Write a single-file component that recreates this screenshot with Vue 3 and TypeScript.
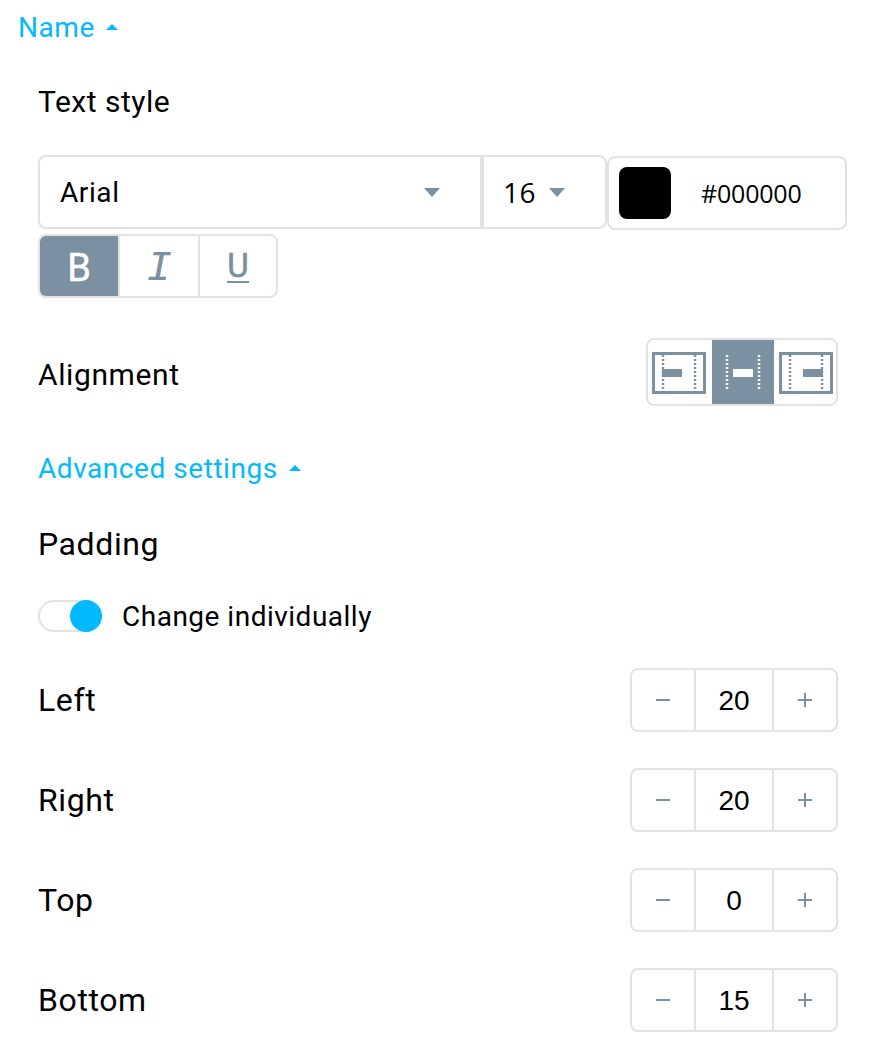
<script setup lang="ts">
const steppers = [
  { label: 'Left', value: 20 },
  { label: 'Right', value: 20 },
  { label: 'Top', value: 0 },
  { label: 'Bottom', value: 15 }
];

const aligns = [
  { id: 'left', barX: 10, active: false },
  { id: 'center', barX: 17, active: true },
  { id: 'right', barX: 24, active: false }
];
</script>

<template>
  <div class="panel">
    <div class="toggle-link name-link">Name <span class="caret-up"></span></div>

    <div class="section">
      <div class="title text-style">Text style</div>

      <div class="font-row">
        <div class="select">
          <div class="font-cell">
            <span>Arial</span>
            <span class="caret-down"></span>
          </div>
          <div class="size-cell">
            <span class="alt size">16</span>
            <span class="caret-down small"></span>
          </div>
        </div>
        <div class="color">
          <span class="swatch"></span>
          <span class="alt hex">#000000</span>
        </div>
      </div>

      <div class="style-group">
        <div class="style-btn active"><span class="b">B</span></div>
        <div class="style-btn"><span class="i">I</span></div>
        <div class="style-btn"><span class="u">U</span></div>
      </div>

      <div class="row align-row">
        <div class="title align-title">Alignment</div>
        <div class="align-group">
          <div v-for="a in aligns" :key="a.id" class="align-btn" :class="{ active: a.active }">
            <svg class="align-icon" width="54" height="42" viewBox="0 0 54 42">
              <rect v-if="!a.active" x="1.5" y="1.5" width="51" height="39" fill="none" stroke="#7b91a1" stroke-width="3" />
              <path
                d="M11 3V39M43 3V39"
                fill="none"
                :stroke="a.active ? '#fff' : '#7b91a1'"
                stroke-width="2.5"
                stroke-dasharray="2 2"
              />
              <rect :x="a.barX" y="17" width="20" height="8" :fill="a.active ? '#fff' : '#7b91a1'" />
            </svg>
          </div>
        </div>
      </div>

      <div class="toggle-link advanced-link">Advanced settings <span class="caret-up"></span></div>

      <div class="title large padding-title">Padding</div>

      <div class="switch-row">
        <span class="switch"><span class="knob"></span></span>
        <span class="switch-label">Change individually</span>
      </div>

      <div v-for="s in steppers" :key="s.label" class="row step-row">
        <div class="title large">{{ s.label }}</div>
        <div class="stepper">
          <div class="step-btn">
            <svg width="14" height="14" viewBox="0 0 14 14"><path d="M0 7H14" stroke="#7b91a1" stroke-width="2" /></svg>
          </div>
          <div class="step-value">{{ s.value }}</div>
          <div class="step-btn">
            <svg width="14" height="14" viewBox="0 0 14 14"><path d="M0 7H14M7 0V14" stroke="#7b91a1" stroke-width="2" /></svg>
          </div>
        </div>
      </div>
    </div>
  </div>
</template>

<style>
html,
body {
  background: #fff;
}
</style>

<style scoped>
.panel {
  width: 880px;
  height: 1048px;
  box-sizing: border-box;
  overflow: hidden;
  font-family: Roboto, sans-serif;
  color: #000;
}

.toggle-link {
  color: #00b9ff;
  letter-spacing: 0.55px;
  display: flex;
  align-items: center;
}

.name-link {
  height: 54px;
  padding-left: 18px;
  font-size: 28px;
}

.caret-up {
  display: inline-block;
  width: 0;
  height: 0;
  margin-left: 11px;
  border-left: 6px solid transparent;
  border-right: 6px solid transparent;
  border-bottom: 6px solid #00b9ff;
}

.section {
  padding: 0 33px 0 38px;
}

.title {
  font-size: 30px;
  line-height: 40px;
  letter-spacing: 0.6px;
}

.title.large {
  font-size: 32px;
}

.text-style {
  margin-top: 28px;
  letter-spacing: 0.5px;
}

.font-row {
  display: flex;
  align-items: flex-start;
  margin-top: 33px;
}

.select {
  display: flex;
  width: 569px;
  height: 74px;
  box-sizing: border-box;
  border: 2px solid #e2e2e2;
  border-radius: 8px;
  font-size: 28px;
  letter-spacing: 0.6px;
}

.font-cell {
  width: 444px;
  box-sizing: border-box;
  padding: 0 40px 0 20px;
  display: flex;
  align-items: center;
  justify-content: space-between;
  border-right: 4px solid #e2e2e2;
}

.size-cell {
  flex: 1;
  display: flex;
  align-items: center;
  padding-left: 19px;
}

.alt {
  font-family: "Open Sans", sans-serif;
  letter-spacing: 0;
}

.size {
  letter-spacing: 0.6px;
}

.caret-down {
  width: 0;
  height: 0;
  border-left: 8px solid transparent;
  border-right: 8px solid transparent;
  border-top: 9px solid #7b91a1;
}

.caret-down.small {
  margin-left: 13px;
}

.color {
  display: flex;
  align-items: center;
  width: 240px;
  height: 74px;
  margin-top: 1px;
  box-sizing: border-box;
  border: 2px solid #e2e2e2;
  border-radius: 8px;
  padding-left: 10px;
}

.swatch {
  width: 52px;
  height: 52px;
  border-radius: 8px;
  background: #000;
}

.hex {
  margin-left: 30px;
  font-size: 25px;
  letter-spacing: -0.2px;
}

.style-group {
  display: flex;
  width: 240px;
  height: 64px;
  margin-top: 4px;
  box-sizing: border-box;
  border: 2px solid #e2e2e2;
  border-radius: 8px;
  overflow: hidden;
  background: #e2e2e2;
}

.style-btn {
  width: 78px;
  flex: none;
  display: flex;
  align-items: center;
  justify-content: center;
  color: #7b91a1;
  background: #fff;
}

.style-btn + .style-btn {
  margin-left: 2px;
}

.style-btn:last-child {
  width: 76px;
}

.style-btn.active {
  background: #7b91a1;
  color: #fff;
}

.b {
  margin-top: 3px;
  font-size: 38px;
  -webkit-text-stroke: 0.4px #fff;
}

.i {
  margin-top: 6px;
  font-family: "Liberation Mono", monospace;
  font-style: italic;
  font-size: 42px;
  -webkit-text-stroke: 0.2px #7b91a1;
}

.u {
  margin-top: 2px;
  font-size: 33px;
  line-height: 28px;
  border-bottom: 2px solid #7b91a1;
  padding-bottom: 1px;
  -webkit-text-stroke: 0.6px #7b91a1;
}

.row {
  display: flex;
  align-items: center;
  justify-content: space-between;
  padding-right: 9px;
}

.align-row {
  height: 68px;
  margin-top: 40px;
}

.align-title {
  margin-top: 6px;
}

.align-group {
  display: flex;
  width: 192px;
  height: 68px;
  box-sizing: border-box;
  border: 2px solid #e2e2e2;
  border-radius: 8px;
  overflow: hidden;
}

.align-btn {
  width: 62px;
  flex: none;
  display: flex;
  align-items: center;
  justify-content: center;
}

.align-icon {
  margin-top: 2px;
}

.align-btn + .align-btn {
  margin-left: 2px;
}

.align-btn.active {
  background: #7b91a1;
}

.align-btn:last-child {
  width: 60px;
}

.advanced-link {
  height: 40px;
  margin-top: 42px;
  font-size: 28px;
  font-weight: 400;
}

.padding-title {
  margin-top: 36px;
}

.switch-row {
  display: flex;
  align-items: center;
  height: 32px;
  margin-top: 36px;
}

.switch {
  position: relative;
  width: 64px;
  height: 32px;
  box-sizing: border-box;
  border: 2px solid #e2e2e2;
  border-radius: 16px;
}

.knob {
  position: absolute;
  top: -2px;
  right: -2px;
  width: 32px;
  height: 32px;
  border-radius: 50%;
  background: #00b9ff;
}

.switch-label {
  margin-left: 20px;
  font-size: 28px;
  letter-spacing: 0.5px;
}

.step-row {
  height: 64px;
  margin-bottom: 36px;
}

.switch-row + .step-row {
  margin-top: 36px;
}

.stepper {
  display: flex;
  width: 208px;
  height: 64px;
  box-sizing: border-box;
  border: 2px solid #e2e2e2;
  border-radius: 8px;
}

.step-btn {
  width: 62px;
  flex: none;
  display: flex;
  align-items: center;
  justify-content: center;
}

.step-value {
  flex: 1;
  display: flex;
  align-items: center;
  justify-content: center;
  padding-top: 1px;
  border-left: 2px solid #e2e2e2;
  border-right: 2px solid #e2e2e2;
  font-family: "Liberation Sans", sans-serif;
  font-size: 28px;
}
</style>
